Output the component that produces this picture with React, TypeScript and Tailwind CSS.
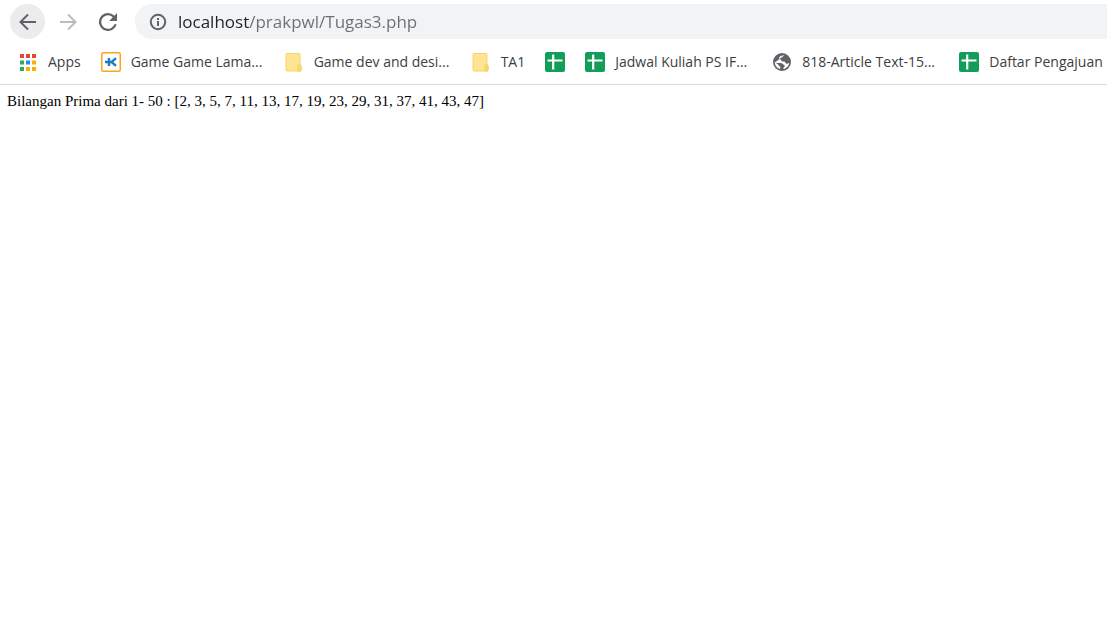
import { ReactNode } from 'react';

function ArrowIcon({ forward = false }: { forward?: boolean }) {
  return (
    <svg viewBox="0 0 20 20" className="size-5" fill="none" stroke="currentColor" strokeWidth="2" aria-hidden="true">
      {forward ? <path d="M2 10h15M10 2.5l7.5 7.5-7.5 7.5" /> : <path d="M18 10H3M10 2.5L2.5 10l7.5 7.5" />}
    </svg>
  );
}

function ReloadIcon() {
  return (
    <svg viewBox="4 4 16 16" className="size-[18px]" fill="currentColor" aria-hidden="true">
      <path d="M17.65 6.35A7.95 7.95 0 0 0 12 4a8 8 0 1 0 7.73 10h-2.08A6 6 0 1 1 12 6c1.66 0 3.14.69 4.22 1.78L13 11h7V4z" />
    </svg>
  );
}

function InfoIcon() {
  return (
    <svg viewBox="0 0 18 18" className="size-[18px]" fill="none" stroke="currentColor" strokeWidth="2" aria-hidden="true">
      <circle cx="9" cy="9" r="7.2" />
      <path d="M9 8v5M9 5v2" />
    </svg>
  );
}

const appColors = ['#ea4335', '#ea4335', '#ea4335', '#34a853', '#1a8cff', '#fbb000', '#34a853', '#fbb000', '#fbb000'];

function AppsIcon() {
  return (
    <svg viewBox="0 0 20 20" className="size-5" aria-hidden="true">
      {appColors.map((color, i) => (
        <rect key={i} x={2 + (i % 3) * 6} y={2 + Math.floor(i / 3) * 6.5} width="4" height="4" fill={color} />
      ))}
    </svg>
  );
}

function KIcon() {
  return (
    <svg viewBox="0 0 20 20" className="size-5" fill="none" aria-hidden="true">
      <rect x="0.75" y="0.75" width="18.5" height="18.5" rx="1.5" fill="#fff" stroke="#f9a61a" strokeWidth="1.5" />
      <path d="M4 10h6M8 6v8M15 6.200L10.500 10l4.500 3.800" stroke="#1b7dc1" strokeWidth="2.4" />
    </svg>
  );
}

function FolderIcon() {
  return (
    <svg viewBox="0 0 20 20" className="size-5" aria-hidden="true">
      <path d="M3 1.500h12a1 1 0 0 1 1 1v10.200a2 2 0 0 1 1 1.800V18a1 1 0 0 1-1 1H3a1 1 0 0 1-1-1V2.500a1 1 0 0 1 1-1z" fill="#ffe592" stroke="#f8d568" />
      <path d="M14 18.500v-4.300a1.500 1.500 0 0 1 3 0V18a1 1 0 0 1-1 1h-2z" fill="#fddd77" stroke="#f2cc55" />
    </svg>
  );
}

function SheetIcon() {
  return (
    <svg viewBox="0 0 20 20" className="size-5" aria-hidden="true">
      <rect width="20" height="20" rx="2" fill="#129d58" />
      <path d="M2.500 8.500h15M8.200 2.500v15" stroke="#fff" strokeWidth="2.200" />
    </svg>
  );
}

function GlobeIcon() {
  return (
    <svg viewBox="0 0 20 20" className="size-5" aria-hidden="true">
      <circle cx="10" cy="10" r="9" fill="#5f6368" />
      <path
        d="M12.500 3.200C10 3.400 7.200 4.300 7 6c-.1 1.500 1.600 1.100 2.200 2.200.6 1.200 1.600 1.400 2.800 1.400 1.400 0 1.100 1.900 2.500 2.200 1 .2 1.800-.6 2.700-1-.3 3-2.600 5.700-5.700 6.300-.5-.8.200-1.700.9-2.300.7-.7.400-1.700-.5-2.100-1.300-.5-2-1.600-3.500-1.600H4.500L2.800 9.600c-.2 3.600 2 6.500 5.200 7.500l.5-2.300c-1.600-.3-1.900-1.800-3-2.700l-2.600-1.500z"
        fill="#fff"
      />
    </svg>
  );
}

type Bookmark = { icon: ReactNode; title: string; label?: string; width?: string };

const bookmarks: Bookmark[] = [
  { icon: <AppsIcon />, title: 'Apps' },
  { icon: <KIcon />, title: 'Game Game Lama...', width: 'min-w-[133px]' },
  { icon: <FolderIcon />, title: 'Game dev and desi...', width: 'min-w-[137px]' },
  { icon: <FolderIcon />, title: 'TA1' },
  { icon: <SheetIcon />, title: '', label: 'Spreadsheet' },
  { icon: <SheetIcon />, title: 'Jadwal Kuliah PS IF...', width: 'min-w-[137px]' },
  { icon: <GlobeIcon />, title: '818-Article Text-15...', width: 'min-w-[137px]' },
  { icon: <SheetIcon />, title: 'Daftar Pengajuan' },
];

const primes = [2, 3, 5, 7, 11, 13, 17, 19, 23, 29, 31, 37, 41, 43, 47];

export default function App() {
  return (
    <div className="min-h-screen overflow-hidden bg-white">
      <header className="border-b border-[#dadce0] font-['Open_Sans',sans-serif]">
        <div className="flex items-center gap-[5px] pt-1 pl-2.5 text-[#5f6368]">
          <button type="button" aria-label="Back" className="flex size-[35px] items-center justify-center rounded-full bg-[#ececed]">
            <ArrowIcon />
          </button>
          <button type="button" aria-label="Forward" className="flex size-[35px] items-center justify-center text-[#babcbe]">
            <ArrowIcon forward />
          </button>
          <button type="button" aria-label="Reload" className="flex size-[35px] items-center justify-center">
            <ReloadIcon />
          </button>
          <div className="ml-[5px] flex h-[35px] min-w-0 flex-1 items-center gap-[11px] rounded-l-full bg-[#f1f3f4] pl-3.5">
            <button type="button" aria-label="View site information">
              <InfoIcon />
            </button>
            <input
              type="text"
              aria-label="Address"
              defaultValue="localhost/prakpwl/Tugas3.php"
              className="min-w-0 flex-1 bg-linear-to-r from-[#202124] from-[71px] to-[#6b6f73] to-[71px] bg-clip-text text-[17px] text-transparent caret-black outline-none"
            />
          </div>
        </div>
        <nav aria-label="Bookmarks" className="flex h-[45px] items-center gap-5 pl-[18px] text-sm whitespace-nowrap text-[#3c4043]">
          {bookmarks.map(({ icon, title, label, width }, i) => (
            <a key={i} href="#" aria-label={label} className="flex shrink-0 items-center gap-2.5">
              {icon}
              {title && <span className={width}>{title}</span>}
            </a>
          ))}
        </nav>
      </header>
      <main className="px-[7px] py-2 font-['Liberation_Serif',serif] text-[15px] leading-[17px] text-black">
        Bilangan Prima dari 1- 50 : [{primes.join(', ')}]
      </main>
    </div>
  );
}
